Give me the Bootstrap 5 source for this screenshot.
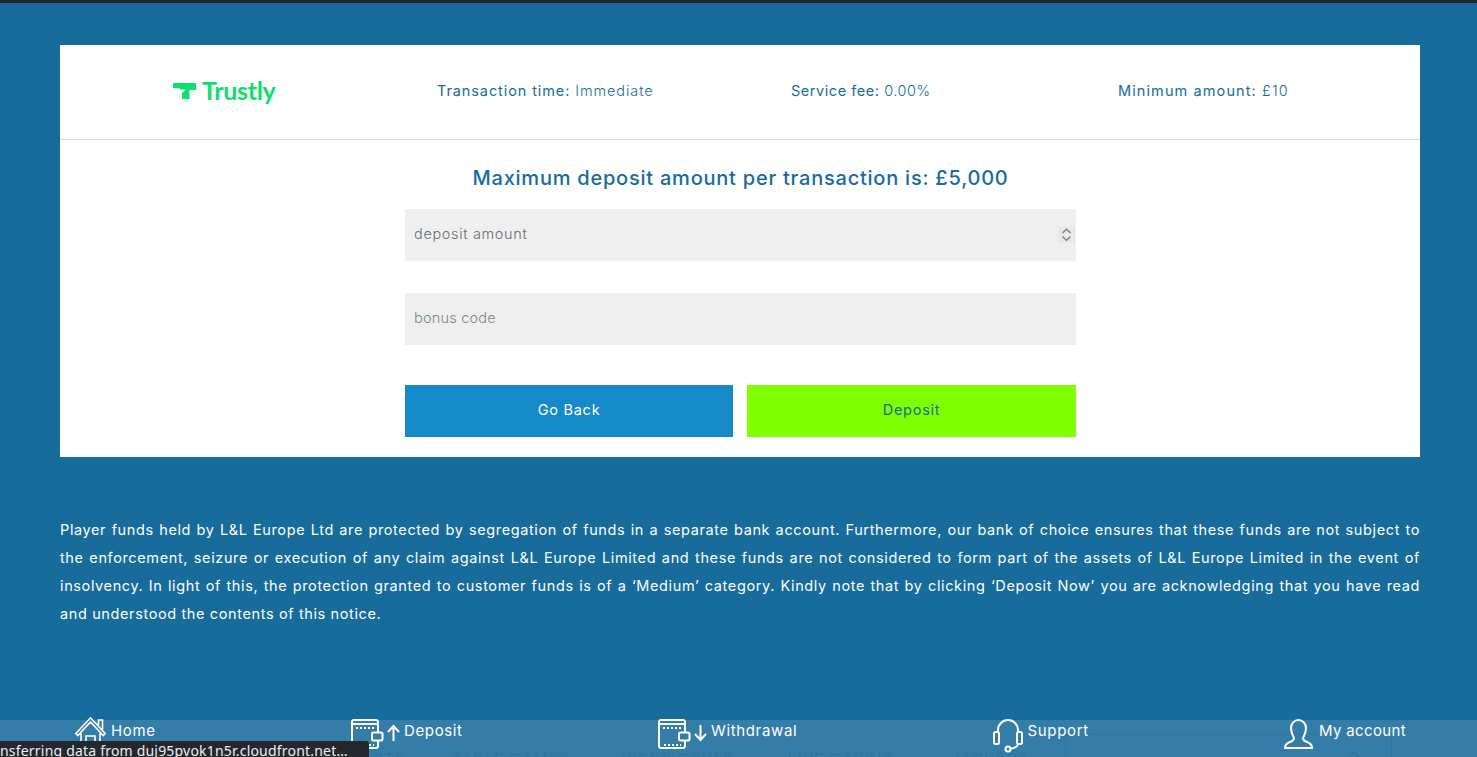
<!doctype html>
<html lang="en">
<head>
<meta charset="utf-8">
<title>Deposit</title>
<link href="https://cdn.jsdelivr.net/npm/bootstrap@5.3.0/dist/css/bootstrap.min.css" rel="stylesheet">
<style>
html,body{height:757px;overflow:hidden}
body{background:#176c9c;font-family:"Inter","Noto Sans",sans-serif;color:#176c9c;letter-spacing:.65px;border-top:3px solid #22272b;position:relative}
.page-wrap{padding:42px 57px 0 60px}
.pay-panel{background:#fff;height:412px}
.pay-head{height:95px;border-bottom:1px solid #d5d8da;font-size:14.5px;padding-bottom:3px;font-weight:300;letter-spacing:.9px}
.pay-head .cell-logo{width:327px;padding-left:112px}
.pay-head b{font-weight:400}
.stat-a{width:354px;padding-left:50px}
.stat-b{width:327px;padding-left:50px;letter-spacing:.55px}
.stat-c{padding-left:50px;letter-spacing:1.1px}
.trustly-word{color:#0ee06e;font-size:25px;font-weight:700;letter-spacing:-.3px;line-height:1;margin-left:6px;font-family:"Lato",sans-serif}
.pay-title{font-size:20px;font-weight:500;text-align:center;margin:0;padding-top:23px;height:69px;letter-spacing:.77px;line-height:30px;padding-left:1px}
.pay-form{width:671px;margin-left:345px}
.pay-input{height:52px;background:#efefef;font-size:14.5px;padding:0 9px 2px;color:#666d73;font-weight:300}
.pay-hint{color:#7c858c;letter-spacing:.2px}
.pay-gap{margin-bottom:32px}
.pay-actions{margin-top:40px}
.pay-btn{height:52px;width:328px;border:0;border-radius:0;font-size:14.5px;font-weight:400;letter-spacing:.75px;padding-bottom:8px}
.pay-btn.btn-back,.pay-btn.btn-back:hover{background:#168ac8;color:#fff}
.pay-btn.btn-dep,.pay-btn.btn-dep:hover{background:#80ff00;color:#176c9c;width:329px}
.stepper{width:17px;height:17px;margin-right:-8px}
.legal{color:#fff;font-size:14.5px;line-height:28px;text-align:justify;margin:59px 0 0;letter-spacing:.62px;font-weight:400}
.bottom-bar{position:absolute;left:0;right:0;top:717px;height:37px;background:rgba(255,255,255,.12);padding:0 71px 0 75px;color:#fff;font-size:15px;z-index:2;letter-spacing:.65px}
.bar-item{height:22px;gap:5px}
.bar-item svg{flex:none;overflow:visible}
.bar-item span{line-height:22px}
.bar-tight{letter-spacing:.35px;gap:6px}
.icon-home{margin-bottom:3px}
.icon-wallet{margin-top:5px}
.icon-arrow{margin:3px -1px 0 -2px}
.icon-phones{margin-top:7px}
.icon-user{margin-top:6px}
.under-nav{position:absolute;left:0;top:744px;width:100%;color:#0f6193;font-size:16px;z-index:1}
.under-item{position:absolute;top:0;white-space:nowrap}
.under-box{position:absolute;left:1065px;top:731px;width:327px;height:40px;border:1px solid #12638f;z-index:1}
.under-glass{position:absolute;left:1347px;top:749px;z-index:1}
.status-tip{position:absolute;left:0;top:738px;width:369px;height:16px;background:#24282c;color:#eee;font-size:14px;line-height:20px;white-space:nowrap;overflow:hidden;border-radius:0 3px 0 0;z-index:3;letter-spacing:.2px;font-family:"Noto Sans",sans-serif}
</style>
</head>
<body>
<div class="page-wrap">
  <div class="pay-panel">
    <div class="pay-head d-flex align-items-center">
      <div class="cell-logo d-flex align-items-center">
        <svg width="24" height="20" viewBox="0 0 24 20"><path d="M1 2h23v7h-6.500v9h-7.500v-6l3.500-3.500H7.500V7H1z" fill="#0ee06e"/></svg>
        <span class="trustly-word">Trustly</span>
      </div>
      <div class="stat-a"><b>Transaction time:</b> Immediate</div>
      <div class="stat-b"><b>Service fee:</b> 0.00%</div>
      <div class="stat-c"><b>Minimum amount:</b> £10</div>
    </div>
    <h1 class="pay-title">Maximum deposit amount per transaction is: £5,000</h1>
    <div class="pay-form">
      <div class="pay-input pay-gap d-flex align-items-center justify-content-between"><span>deposit amount</span>
        <svg class="stepper" viewBox="0 0 17 17"><rect width="17" height="17" fill="#e8e8e8"/><path d="M4.500 7l4-4 4 4M4.500 10.500l4 4 4-4" fill="none" stroke="#777" stroke-width="1.200"/></svg></div>
      <div class="pay-input d-flex align-items-center"><span class="pay-hint">bonus code</span></div>
      <div class="d-flex justify-content-between pay-actions">
        <button class="btn pay-btn btn-back" type="button">Go Back</button>
        <button class="btn pay-btn btn-dep" type="button">Deposit</button>
      </div>
    </div>
  </div>
  <p class="legal">Player funds held by L&amp;L Europe Ltd are protected by segregation of funds in a separate bank account. Furthermore, our bank of choice ensures that these funds are not subject to the enforcement, seizure or execution of any claim against L&amp;L Europe Limited and these funds are not considered to form part of the assets of L&amp;L Europe Limited in the event of insolvency. In light of this, the protection granted to customer funds is of a ‘Medium’ category. Kindly note that by clicking ‘Deposit Now’ you are acknowledging that you have read and understood the contents of this notice.</p>
</div>
<div class="under-nav">
  <span class="under-item" style="left:351px">SLOTS</span>
  <span class="under-item" style="left:452px">TABLE GAMES</span>
  <span class="under-item" style="left:621px">VIDEO POKER</span>
  <span class="under-item" style="left:788px">LIVE CASINO</span>
  <span class="under-item" style="left:951px">JACKPOT</span>
</div>
<div class="under-box"></div>
<svg class="under-glass" width="14" height="14" viewBox="0 0 14 14" fill="none" stroke="#12638f" stroke-width="1.500"><circle cx="6" cy="6" r="5"/><path d="M10 10l3 3"/></svg>
<nav class="bottom-bar d-flex justify-content-between align-items-start">
  <div class="bar-item d-flex align-items-center">
    <svg class="icon-home" width="31" height="26" viewBox="0 0 31 26" fill="none" stroke="#fff" stroke-width="1.600"><path d="M.8 16.500L15.500.8 30.200 16.500l-2 2L15.500 5 2.800 18.500zM23.500 8V3h4v9.500M6 16v10h19V16M11 26v-7h9v7"/></svg>
    <span>Home</span>
  </div>
  <div class="bar-item d-flex align-items-center">
    <svg class="icon-wallet" width="33" height="30" viewBox="0 0 33 30" fill="none" stroke="#fff" stroke-width="2"><path d="M27 13V3a2 2 0 0 0-2-2H3a2 2 0 0 0-2 2v24a2 2 0 0 0 2 2h22a2 2 0 0 0 2-2v-5"/><path d="M1 5h26"/><path d="M5 9h18M6 26h17" stroke-dasharray="2 2"/><rect x="21" y="13.500" width="10.500" height="8" rx="1.500"/></svg>
    <svg class="icon-arrow" width="13" height="16" viewBox="0 0 13 16" fill="none" stroke="#fff" stroke-width="2"><path d="M6.500 16V1M1 7l5.500-6L12 7"/></svg>
    <span>Deposit</span>
  </div>
  <div class="bar-item d-flex align-items-center">
    <svg class="icon-wallet" width="33" height="30" viewBox="0 0 33 30" fill="none" stroke="#fff" stroke-width="2"><path d="M27 13V3a2 2 0 0 0-2-2H3a2 2 0 0 0-2 2v24a2 2 0 0 0 2 2h22a2 2 0 0 0 2-2v-5"/><path d="M1 5h26"/><path d="M5 9h18M6 26h17" stroke-dasharray="2 2"/><rect x="21" y="13.500" width="10.500" height="8" rx="1.500"/></svg>
    <svg class="icon-arrow" width="13" height="16" viewBox="0 0 13 16" fill="none" stroke="#fff" stroke-width="2"><path d="M6.500 0v15M1 9l5.500 6L12 9"/></svg>
    <span>Withdrawal</span>
  </div>
  <div class="bar-item d-flex align-items-center">
    <svg class="icon-phones" width="30" height="32" viewBox="0 0 30 32" fill="none" stroke="#fff" stroke-width="2"><path d="M5 13V11a10 10 0 0 1 20 0v2M25 25c0 3-3 4-8 5"/><rect x="1" y="13" width="5" height="12" rx="1.500"/><rect x="24" y="13" width="5" height="12" rx="1.500"/><circle cx="15" cy="30" r="2.500"/></svg>
    <span>Support</span>
  </div>
  <div class="bar-item bar-tight d-flex align-items-center">
    <svg class="icon-user" width="29" height="30" viewBox="0 0 29 30" fill="none" stroke="#fff" stroke-width="2"><path d="M7 9a7.500 8 0 0 1 15 0c0 5-2 8-3 10 0 2 1 3 4 4 3 1 5 3 5 6H1c0-3 2-5 5-6 3-1 4-2 4-4-1-2-3-5-3-10z"/></svg>
    <span>My account</span>
  </div>
</nav>
<div class="status-tip"><span>nsferring data from duj95pvok1n5r.cloudfront.net…</span></div>
</body>
</html>
